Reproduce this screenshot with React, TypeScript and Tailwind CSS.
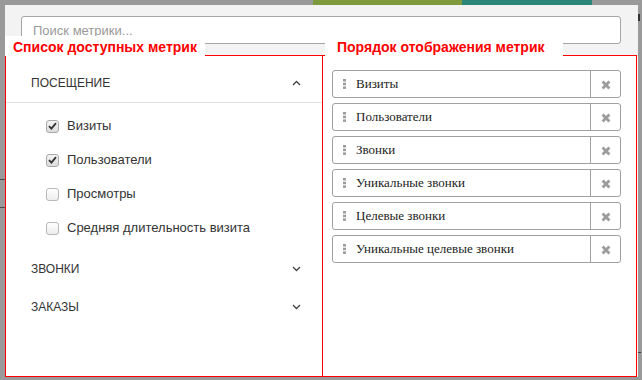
import React from 'react';

const sections = [
  { title: 'ПОСЕЩЕНИЕ', open: true },
  { title: 'ЗВОНКИ', open: false },
  { title: 'ЗАКАЗЫ', open: false },
];

const visitMetrics = [
  { name: 'Визиты', checked: true },
  { name: 'Пользователи', checked: true },
  { name: 'Просмотры', checked: false },
  { name: 'Средняя длительность визита', checked: false },
];

const selected = [
  'Визиты',
  'Пользователи',
  'Звонки',
  'Уникальные звонки',
  'Целевые звонки',
  'Уникальные целевые звонки',
];

const Chevron = ({ up }: { up?: boolean }) => (
  <svg width="9" height="6" viewBox="0 0 9 6" className="text-[#444]">
    <polyline
      points={up ? '1,5 4.5,1.5 8,5' : '1,1 4.5,4.5 8,1'}
      fill="none"
      stroke="currentColor"
      strokeWidth="1.3"
    />
  </svg>
);

const Checkbox = ({ checked }: { checked: boolean }) => (
  <span
    className={
      checked
        ? 'flex h-[13px] w-[13px] items-center justify-center rounded-[3px] border border-[#a8a8a8] bg-linear-to-b from-[#f4f4f4] to-[#dcdcdc]'
        : 'flex h-[13px] w-[13px] items-center justify-center rounded-[3px] border border-[#b8b8b8] bg-linear-to-b from-white to-[#ededed]'
    }
  >
    {checked && (
      <svg width="9" height="8" viewBox="0 0 9 8">
        <path d="M1 4.2 L3.4 6.6 L8 1.2" fill="none" stroke="#333" strokeWidth="1.8" />
      </svg>
    )}
  </span>
);

const Grip = () => (
  <svg width="3" height="10" viewBox="0 0 3 10" className="shrink-0">
    <rect x="0" y="0" width="3" height="2.5" fill="#9c9c9c" />
    <rect x="0" y="3.7" width="3" height="2.5" fill="#9c9c9c" />
    <rect x="0" y="7.4" width="3" height="2.5" fill="#9c9c9c" />
  </svg>
);

// thick "times" cross
const Cross = () => (
  <svg width="10" height="10" viewBox="0 0 10 10">
    <path
      d="M0.6 2.6 L2.6 0.6 L5 3 L7.4 0.6 L9.4 2.6 L7 5 L9.4 7.4 L7.4 9.4 L5 7 L2.6 9.4 L0.6 7.4 L3 5 Z"
      fill="#9c9c9c"
    />
  </svg>
);

export default function App() {
  return (
    <div className="h-[380px] w-[642px] overflow-hidden bg-[#9a9a9a] font-['Liberation_Sans',Arial,sans-serif]">
      {/* page behind the overlay */}
      <div className="flex h-[5px]">
        <div className="w-[313px]" />
        <div className="w-[149px] bg-[#7e9a3d]" />
        <div className="w-[130px] bg-[#2c8678]" />
      </div>

      <div className="flex">
        <div className="w-[5px]">
          <div className="mt-[174px] h-px bg-[#4a4a4a]" />
          <div className="mt-[27px] h-px bg-[#4a4a4a]" />
        </div>

        {/* modal */}
        <div className="flex h-[372px] w-[633px] flex-col bg-[#f3f3f3]">
          <div className="pl-[16px] pt-[11px]">
            <input
              placeholder="Поиск метрики..."
              className="block h-[28px] w-[600px] rounded-[3px] border border-[#a6a6a6] bg-white px-[11px] text-[13px] text-[#333] outline-none placeholder:text-[#999]"
            />
          </div>

          <div className="mt-[11px] flex h-[322px]">
            <section className="relative w-[318px] border border-[#ff0000] bg-white">
              <div className="absolute bottom-full left-[-1px] h-[20px] w-[200px] bg-white pl-[8px] pt-[3px] text-[14px] font-bold leading-[17px] text-[#ff0000]">
                Список доступных метрик
              </div>

              <div className="pt-[8px]">
                {sections.map((s) => (
                  <div key={s.title}>
                    <div
                      className={
                        s.open
                          ? 'flex h-[39px] items-center justify-between border-b border-[#e2e2e2] pl-[25px] pr-[21px]'
                          : 'flex h-[38px] items-center justify-between pl-[25px] pr-[21px]'
                      }
                    >
                      <span className="text-[12px] text-[#333]">{s.title}</span>
                      <Chevron up={s.open} />
                    </div>
                    {s.open && (
                      <div className="pb-[5px] pt-[6px]">
                        {visitMetrics.map((m) => (
                          <label key={m.name} className="flex h-[34px] items-center gap-2 pl-[40px] text-[13px] text-[#333]">
                            <Checkbox checked={m.checked} />
                            <span>{m.name}</span>
                          </label>
                        ))}
                      </div>
                    )}
                  </div>
                ))}
              </div>
            </section>

            <section className="relative w-[314px] border-y border-r border-[#ff0000] bg-white">
              <div className="absolute bottom-full left-[2px] h-[20px] w-[238px] bg-white pl-[12px] pt-[3px] text-[14px] font-bold leading-[17px] text-[#ff0000]">
                Порядок отображения метрик
              </div>

              <div className="flex flex-col gap-[5px] pl-[9px] pt-[14px]">
                {selected.map((name) => (
                  <div key={name} className="flex h-[28px] w-[289px] rounded-[3px] border border-[#a0a0a0] bg-white">
                    <div className="flex flex-1 items-center gap-[10px] pl-[10px] font-['Liberation_Serif','Times_New_Roman',serif] text-[13px] text-[#222]">
                      <Grip />
                      <span>{name}</span>
                    </div>
                    <div className="flex w-[30px] items-center justify-center border-l border-[#a0a0a0] pt-[2px]">
                      <Cross />
                    </div>
                  </div>
                ))}
              </div>
            </section>
          </div>
        </div>

        <div className="w-[4px]">
          <div className="mt-[9px] h-[7px] w-[2px] bg-[#333]" />
          <div className="mt-[331px] h-px w-[3px] bg-[#444]" />
        </div>
      </div>
    </div>
  );
}
